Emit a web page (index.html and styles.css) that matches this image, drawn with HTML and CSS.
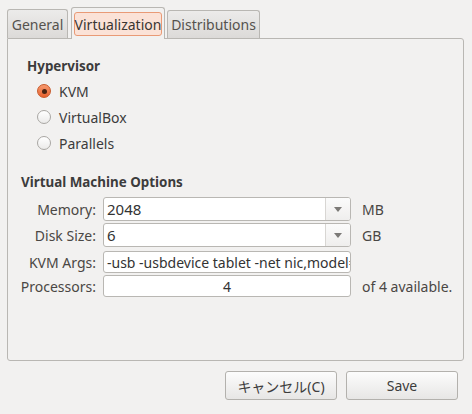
FILE: index.html
```html
<!DOCTYPE html>
<html>
<head>
<meta charset="utf-8">
<link rel="stylesheet" href="styles.css">
</head>
<body>
<div class="window">
  <div class="tabs">
    <div class="tab tab-general">General</div>
    <div class="tab-active"><div class="tab-focus">Virtualization</div></div>
    <div class="tab tab-dist">Distributions</div>
  </div>
  <div class="frame">
    <div class="heading heading-hyp">Hypervisor</div>
    <div class="radios">
      <div class="radio-row"><span class="radio radio-on"><span class="dot"></span></span><span>KVM</span></div>
      <div class="radio-row"><span class="radio"></span><span>VirtualBox</span></div>
      <div class="radio-row"><span class="radio"></span><span>Parallels</span></div>
    </div>
    <div class="heading heading-vm">Virtual Machine Options</div>
    <div class="options">
      <div class="row row-combo">
        <div class="label">Memory:</div>
        <div class="combo"><div class="combo-text">2048</div><div class="combo-btn"><span class="arrow"></span></div></div>
        <div class="unit">MB</div>
      </div>
      <div class="row row-combo row-disk">
        <div class="label">Disk Size:</div>
        <div class="combo"><div class="combo-text">6</div><div class="combo-btn"><span class="arrow"></span></div></div>
        <div class="unit">GB</div>
      </div>
      <div class="row row-entry row-kvm">
        <div class="label">KVM Args:</div>
        <div class="entry"><span class="entry-text">-usb -usbdevice tablet -net nic,model=virtio</span></div>
      </div>
      <div class="row row-entry row-proc">
        <div class="label">Processors:</div>
        <div class="entry entry-center">4</div>
        <div class="unit">of 4 available.</div>
      </div>
    </div>
  </div>
  <div class="buttons">
    <div class="button">キャンセル(C)</div>
    <div class="button">Save</div>
  </div>
</div>
</body>
</html>
```
FILE: styles.css
```css
html, body {
  margin: 0;
  padding: 0;
}
body {
  width: 472px;
  height: 414px;
  background: #f2f1f0;
  font-family: "Noto Sans", "Noto Sans CJK JP", sans-serif;
  font-size: 14px;
  color: #3c3c3c;
  overflow: hidden;
}
.window {
  padding: 7px 8px 0 7px;
}
.tabs {
  display: flex;
  align-items: flex-end;
  height: 31px;
}
.tab {
  box-sizing: border-box;
  border: 1px solid #b9b7b3;
  border-bottom: none;
  border-radius: 3px 3px 0 0;
  background: linear-gradient(#ecebea, #dcdad8);
  color: #55524e;
  display: flex;
  align-items: center;
  justify-content: center;
}
.tab-general {
  width: 61px;
  height: 29px;
  margin-right: 3px;
}
.tab-dist {
  width: 93px;
  height: 28px;
  margin-left: 2px;
}
.tab-active {
  box-sizing: border-box;
  width: 94px;
  height: 32px;
  margin-bottom: -1px;
  position: relative;
  z-index: 1;
  border: 1px solid #b9b7b3;
  border-bottom: none;
  border-radius: 3px 3px 0 0;
  background: #f2f1f0;
  padding: 4px 2px 3px 2px;
}
.tab-focus {
  box-sizing: border-box;
  height: 24px;
  border: 1px solid #e99a76;
  border-radius: 3px;
  background: #fbe2d7;
  display: flex;
  align-items: center;
  justify-content: center;
  color: #3a3632;
}
.frame {
  box-sizing: border-box;
  width: 457px;
  height: 323px;
  border: 1px solid #b9b7b3;
  border-radius: 0 3px 3px 3px;
  background: #f2f1f0;
  padding-top: 18px;
}
.heading {
  font-weight: bold;
  font-size: 13.4px;
  line-height: 18px;
  color: #3c3c3c;
}
.heading-hyp {
  padding-left: 19px;
}
.radios {
  margin-top: 3px;
  padding-left: 29px;
}
.radio-row {
  display: flex;
  align-items: center;
  height: 26px;
  gap: 8px;
}
.radio {
  box-sizing: border-box;
  width: 14px;
  height: 14px;
  border-radius: 50%;
  border: 1px solid #a9a7a3;
  background: linear-gradient(#ffffff, #ebeae9);
  display: flex;
  align-items: center;
  justify-content: center;
}
.radio-on {
  border-color: #c85a2b;
  background: linear-gradient(#f79a70, #e8622e);
}
.dot {
  width: 5px;
  height: 5px;
  border-radius: 50%;
  background: #4a2412;
}
.heading-vm {
  margin-top: 17px;
  padding-left: 13px;
}
.options {
  margin-top: 6px;
  display: flex;
  flex-direction: column;
}
.row {
  display: flex;
  align-items: center;
}
.row-combo {
  height: 24px;
}
.row-disk {
  margin-top: 2px;
}
.row-entry {
  height: 22px;
}
.row-kvm {
  margin-top: 4px;
}
.row-proc {
  margin-top: 2px;
}
.label {
  width: 88px;
  text-align: right;
  color: #4a4744;
  flex: none;
}
.combo, .entry {
  box-sizing: border-box;
  width: 248px;
  height: 100%;
  margin-left: 7px;
  border: 1px solid #b9b7b3;
  border-radius: 3px;
  flex: none;
}
.combo {
  display: flex;
  background: #ffffff;
}
.combo-text {
  flex: 1;
  padding-left: 3px;
  display: flex;
  align-items: center;
  color: #333;
  font-size: 15px;
}
.combo-btn {
  width: 24px;
  border-left: 1px solid #d8d6d3;
  background: linear-gradient(#fbfbfb, #efeeed);
  border-radius: 0 2px 2px 0;
  display: flex;
  align-items: center;
  justify-content: center;
}
.arrow {
  width: 0;
  height: 0;
  border-left: 4px solid transparent;
  border-right: 4px solid transparent;
  border-top: 5px solid #7c7a77;
  margin-top: 1px;
}
.entry {
  background: #ffffff;
  overflow: hidden;
  white-space: nowrap;
  display: flex;
  align-items: center;
  padding-left: 3px;
  color: #333;
}
.entry-center {
  justify-content: center;
  padding-left: 0;
}
.unit {
  margin-left: 11px;
  color: #4a4744;
}
.buttons {
  display: flex;
  justify-content: flex-end;
  gap: 9px;
  margin-top: 10px;
  margin-right: 6px;
}
.button {
  box-sizing: border-box;
  width: 112px;
  height: 29px;
  border: 1px solid #b3b1ad;
  border-radius: 3px;
  background: linear-gradient(#fcfcfc, #e7e6e5);
  display: flex;
  align-items: center;
  justify-content: center;
  color: #3c3c3c;
}
```
